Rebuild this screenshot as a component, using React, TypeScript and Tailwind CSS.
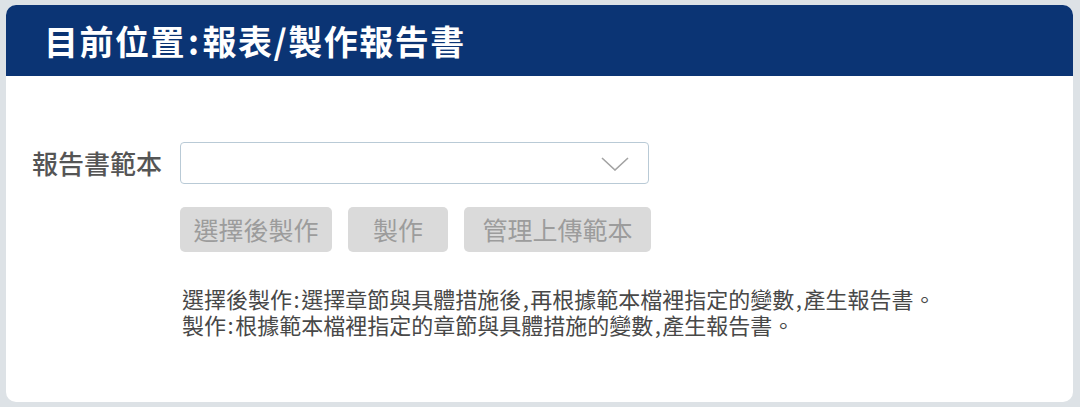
import { useState } from 'react';

const cjk = { fontFamily: '"Noto Sans CJK TC", "Noto Sans", sans-serif' };

// half-width punctuation with a little air, as in the original page
function P({ c }: { c: string }) {
  return <span className="mx-[1.5px] inline-block">{c}</span>;
}

export default function App() {
  const [template, setTemplate] = useState('');

  return (
    <div className="min-h-screen bg-[#dde2e6] pt-[5px] pl-[6px] pr-[7px]" style={cjk}>
      <div className="h-[397px] overflow-hidden rounded-[10px] bg-white">
        <div className="flex h-[71px] items-center bg-[#0b3474] pl-[38px]">
          <h1 className="text-[34px] font-bold leading-none tracking-[1.5px] text-white">
            目前位置<span className="mx-[2px]">:</span>報表/製作報告書
          </h1>
        </div>

        <div className="pl-[26px] pt-[66px]">
          <div className="flex items-center">
            <label className="w-[148px] text-[26px] font-medium leading-none text-[#555]">報告書範本</label>
            <div className="relative h-[42px] w-[469px] rounded-[4px] border border-[#b9cad6] bg-white">
              <select
                value={template}
                onChange={(e) => setTemplate(e.target.value)}
                className="h-full w-full appearance-none bg-transparent px-3 text-[18px] text-[#555] outline-none"
              >
                <option value=""></option>
              </select>
              <svg
                className="pointer-events-none absolute right-[19px] top-[14px]"
                width="28"
                height="14"
                viewBox="0 0 28 14"
                fill="none"
              >
                <polyline points="1,1 14,13 27,1" stroke="#a3a3a3" strokeWidth="1.6" />
              </svg>
            </div>
          </div>

          <div className="ml-[148px] mt-[23px] flex gap-4">
            <button disabled className="h-[45px] w-[152px] rounded-[5px] bg-[#dadada] text-[25px] leading-none text-[#9c9c9c]">
              選擇後製作
            </button>
            <button disabled className="h-[45px] w-[100px] rounded-[5px] bg-[#dadada] text-[25px] leading-none text-[#9c9c9c]">
              製作
            </button>
            <button disabled className="h-[45px] w-[187px] rounded-[5px] bg-[#dadada] text-[25px] leading-none text-[#9c9c9c]">
              管理上傳範本
            </button>
          </div>

          <div className="ml-[150px] mt-[33px] text-[22px] leading-[26px] text-[#484848]">
            <p>
              選擇後製作<P c=":" />選擇章節與具體措施後<P c="," />再根據範本檔裡指定的變數<P c="," />產生報告書。
            </p>
            <p>
              製作<P c=":" />根據範本檔裡指定的章節與具體措施的變數<P c="," />產生報告書。
            </p>
          </div>
        </div>
      </div>
    </div>
  );
}
